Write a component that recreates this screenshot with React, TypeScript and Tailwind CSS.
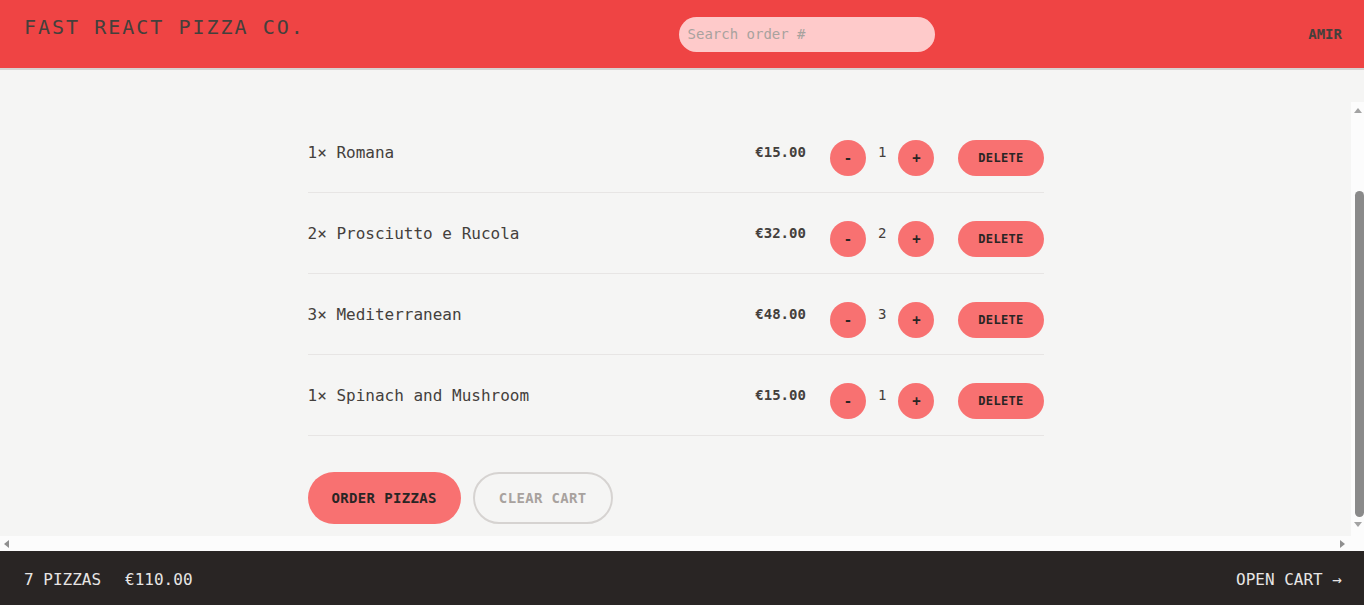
type CartItem = {
  id: number;
  name: string;
  quantity: number;
  unitPrice: number;
};

const cart: CartItem[] = [
  { id: 12, name: "Romana", quantity: 1, unitPrice: 15 },
  { id: 6, name: "Prosciutto e Rucola", quantity: 2, unitPrice: 16 },
  { id: 11, name: "Mediterranean", quantity: 3, unitPrice: 16 },
  { id: 9, name: "Spinach and Mushroom", quantity: 1, unitPrice: 15 },
];

const formatCurrency = (value: number) => `€${value.toFixed(2)}`;

function Header() {
  return (
    <header className="flex h-[70px] items-center justify-between border-b-2 border-[#d6d3d1] bg-[#ef4444] pl-6 pr-[22px] uppercase">
      <a href="#" className="mb-3.5 text-xl leading-7 tracking-widest">
        Fast React Pizza Co.
      </a>
      <input
        placeholder="Search order #"
        className="h-[35px] w-64 rounded-full bg-[#fecaca] px-[9px] text-sm placeholder:text-[#a8a29e] focus:outline-none"
      />
      <div className="text-sm font-semibold">Amir</div>
    </header>
  );
}

function CartRow({ item }: { item: CartItem }) {
  return (
    <li className="flex items-center justify-between py-4">
      <p className="pt-0.5 text-base leading-6">
        {item.quantity}&times; {item.name}
      </p>
      <div className="flex items-center gap-6">
        <p className="text-sm font-bold">
          {formatCurrency(item.quantity * item.unitPrice)}
        </p>
        <div className="flex items-center gap-3">
          <button className="mt-3 h-9 w-9 rounded-full bg-[#f87171] text-sm font-semibold text-[#292524]">
            -
          </button>
          <span className="text-sm font-medium">{item.quantity}</span>
          <button className="mt-3 h-9 w-9 rounded-full bg-[#f87171] text-sm font-semibold text-[#292524]">
            +
          </button>
        </div>
        <button className="mt-3 rounded-full bg-[#f87171] px-5 py-2.5 text-xs font-semibold uppercase tracking-wide text-[#292524]">
          Delete
        </button>
      </div>
    </li>
  );
}

function VerticalBar() {
  return (
    <div className="flex flex-col items-center bg-[#fcfcfc]">
      <div className="mt-[6px] h-0 w-0 border-x-[4px] border-b-[5px] border-x-transparent border-b-[#a3a3a3]" />
      <div className="flex-1" />
      <div className="ml-[3px] h-[326px] w-[9px] rounded-full bg-[#8a8a8a]" />
      <div className="mb-[9px] mt-[5px] h-0 w-0 border-x-[4px] border-t-[5px] border-x-transparent border-t-[#a3a3a3]" />
    </div>
  );
}

function HorizontalBar() {
  return (
    <div className="flex items-center justify-between bg-[#fcfcfc] pl-[4px] pr-[6px]">
      <div className="h-0 w-0 border-y-[4px] border-r-[5px] border-y-transparent border-r-[#8f8f8f]" />
      <div className="h-0 w-0 border-y-[4px] border-l-[5px] border-y-transparent border-l-[#8f8f8f]" />
    </div>
  );
}

function Footer() {
  const pizzas = cart.reduce((s, i) => s + i.quantity, 0);
  const total = cart.reduce((s, i) => s + i.quantity * i.unitPrice, 0);
  return (
    <footer className="flex h-[54px] items-center justify-between bg-[#292524] pl-6 pr-[22px] pt-1 text-base uppercase text-[#e7e5e4]">
      <p className="flex gap-6">
        <span>{pizzas} pizzas</span>
        <span>{formatCurrency(total)}</span>
      </p>
      <a href="#">Open cart &rarr;</a>
    </footer>
  );
}

export default function App() {
  return (
    <div className="grid h-screen grid-rows-[auto_1fr_auto] bg-[#f5f5f4] font-['DejaVu_Sans_Mono',monospace] text-[#44403c]">
      <Header />
      <div className="min-h-0 pt-8">
        <div className="grid h-full grid-cols-[1fr_13px] grid-rows-[1fr_15px]">
          <div className="min-h-0 overflow-hidden">
            <main className="mx-auto max-w-3xl px-4 pt-2.5">
              <ul className="divide-y divide-[#e7e5e4] border-b border-[#e7e5e4]">
                {cart.map((item) => (
                  <CartRow key={item.id} item={item} />
                ))}
              </ul>
              <div className="mt-9 flex gap-3">
                <button className="rounded-full bg-[#f87171] px-6 py-4 text-sm font-semibold uppercase tracking-wide text-[#292524]">
                  Order pizzas
                </button>
                <button className="rounded-full border-2 border-[#d6d3d1] px-6 py-3.5 text-sm font-semibold uppercase tracking-wide text-[#a8a29e]">
                  Clear cart
                </button>
              </div>
            </main>
          </div>
          <VerticalBar />
          <HorizontalBar />
          <div className="bg-[#fcfcfc]" />
        </div>
      </div>
      <Footer />
    </div>
  );
}
